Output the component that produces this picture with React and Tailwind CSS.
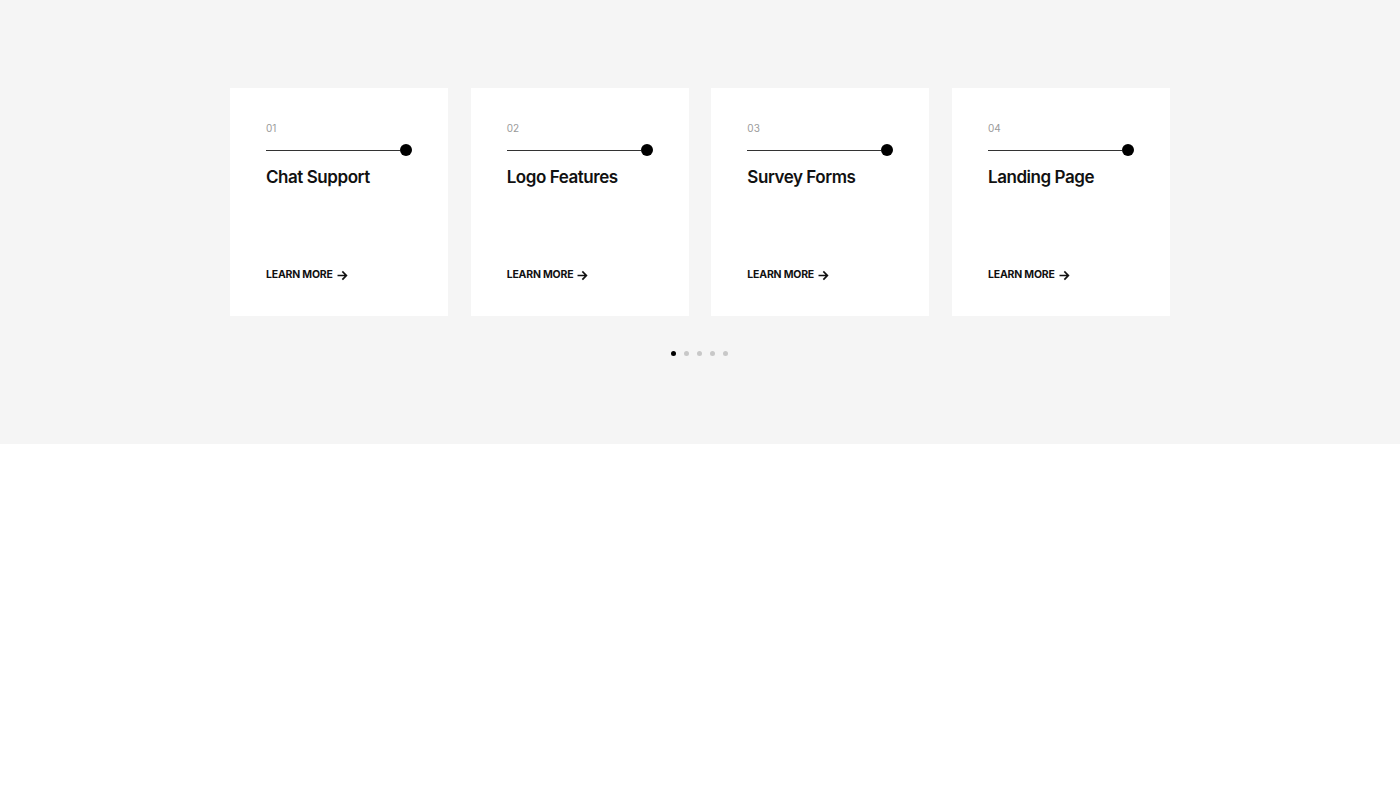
const cards = [
  { num: '01', title: 'Chat Support' },
  { num: '02', title: 'Logo Features' },
  { num: '03', title: 'Survey Forms' },
  { num: '04', title: 'Landing Page' },
];

const ArrowRight = () => (
  <svg width="11" height="11" viewBox="0 0 12 12" fill="none" stroke="currentColor" strokeWidth="1.9" strokeLinecap="square">
    <path d="M1.5 6h8.5M6.5 2.2L10.2 6 6.5 9.8" />
  </svg>
);

const ServiceCard = ({ num, title }) => (
  <div className="w-[218px] h-[228px] bg-white px-[36px] pt-[34px] flex flex-col">
    <div className="text-[10px] leading-[12px] text-[#9a9a9a]">{num}</div>
    <div className="mt-[10px] h-[12px] flex items-center">
      <div className="flex-1 h-px bg-[#333]" />
      <div className="w-3 h-3 rounded-full bg-black" />
    </div>
    <h3 className="mt-[10px] text-[17px] leading-[22px] font-semibold text-[#111] tracking-[-0.45px]">{title}</h3>
    <a href="#" className="mt-[80px] flex items-center gap-[4px] text-[10.5px] leading-[14px] font-bold text-[#111] uppercase tracking-[-0.2px]">
      Learn More
      <ArrowRight />
    </a>
  </div>
);

export default function App() {
  return (
    <div className="min-h-screen bg-white font-['Inter',sans-serif]">
      <section className="bg-[#f5f5f5] h-[444px] pt-[88px] flex flex-col items-center">
        <div className="flex gap-[22.67px]">
          {cards.map((c) => (
            <ServiceCard key={c.num} {...c} />
          ))}
        </div>
        <div className="mt-[35px] flex items-center gap-[8px] -translate-x-px">
          {[0, 1, 2, 3, 4].map((i) => (
            <span
              key={i}
              className={`w-[5px] h-[5px] rounded-full ${i === 0 ? 'bg-black' : 'bg-[#c8c8c8]'}`}
            />
          ))}
        </div>
      </section>
    </div>
  );
}
